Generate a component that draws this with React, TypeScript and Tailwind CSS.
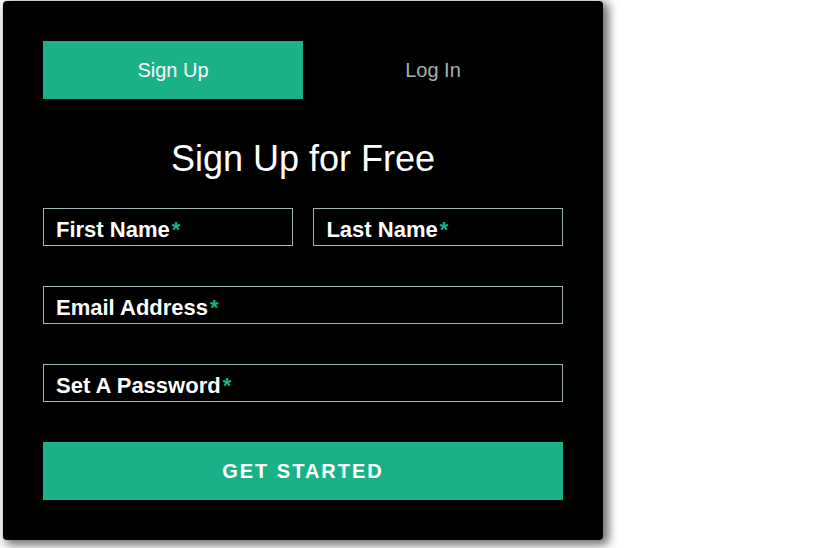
import React from "react";

function Field({ label, className = "" }: { label: string; className?: string }) {
  return (
    <div className={`h-[38px] border border-[#a0b3b0] px-3 ${className}`}>
      <span className="mt-[10px] block text-[22px] font-bold leading-[22px] text-white">
        {label}
        <span className="ml-[2px] text-[#1ab188]">*</span>
      </span>
    </div>
  );
}

export default function App() {
  return (
    <div className="min-h-[548px] w-[819px] bg-white font-['Liberation_Sans',Arial,sans-serif]">
      <div className="ml-[3px] pt-[1px]">
        <div className="w-[600px] rounded-[4px] bg-black p-10 shadow-[4px_3px_10px_2px_rgba(0,0,0,0.55)]">
          <div className="flex h-[58px]">
            <div className="flex w-1/2 items-center justify-center bg-[#1ab188] text-[20px] text-white">
              Sign Up
            </div>
            <div className="flex w-1/2 items-center justify-center bg-black text-[20px] text-[#a0b3b0]">
              Log In
            </div>
          </div>
          <h1 className="mt-[39px] text-center text-[36px] leading-[42px] font-normal text-white">
            Sign Up for Free
          </h1>
          <div className="mt-[28px] flex justify-between">
            <Field label="First Name" className="w-[48%]" />
            <Field label="Last Name" className="w-[48%]" />
          </div>
          <Field label="Email Address" className="mt-10" />
          <Field label="Set A Password" className="mt-10" />
          <button className="mt-10 flex h-[58px] w-full items-center justify-center bg-[#1ab188] text-[20px] font-bold uppercase tracking-[2px] text-white">
            Get Started
          </button>
        </div>
      </div>
    </div>
  );
}
